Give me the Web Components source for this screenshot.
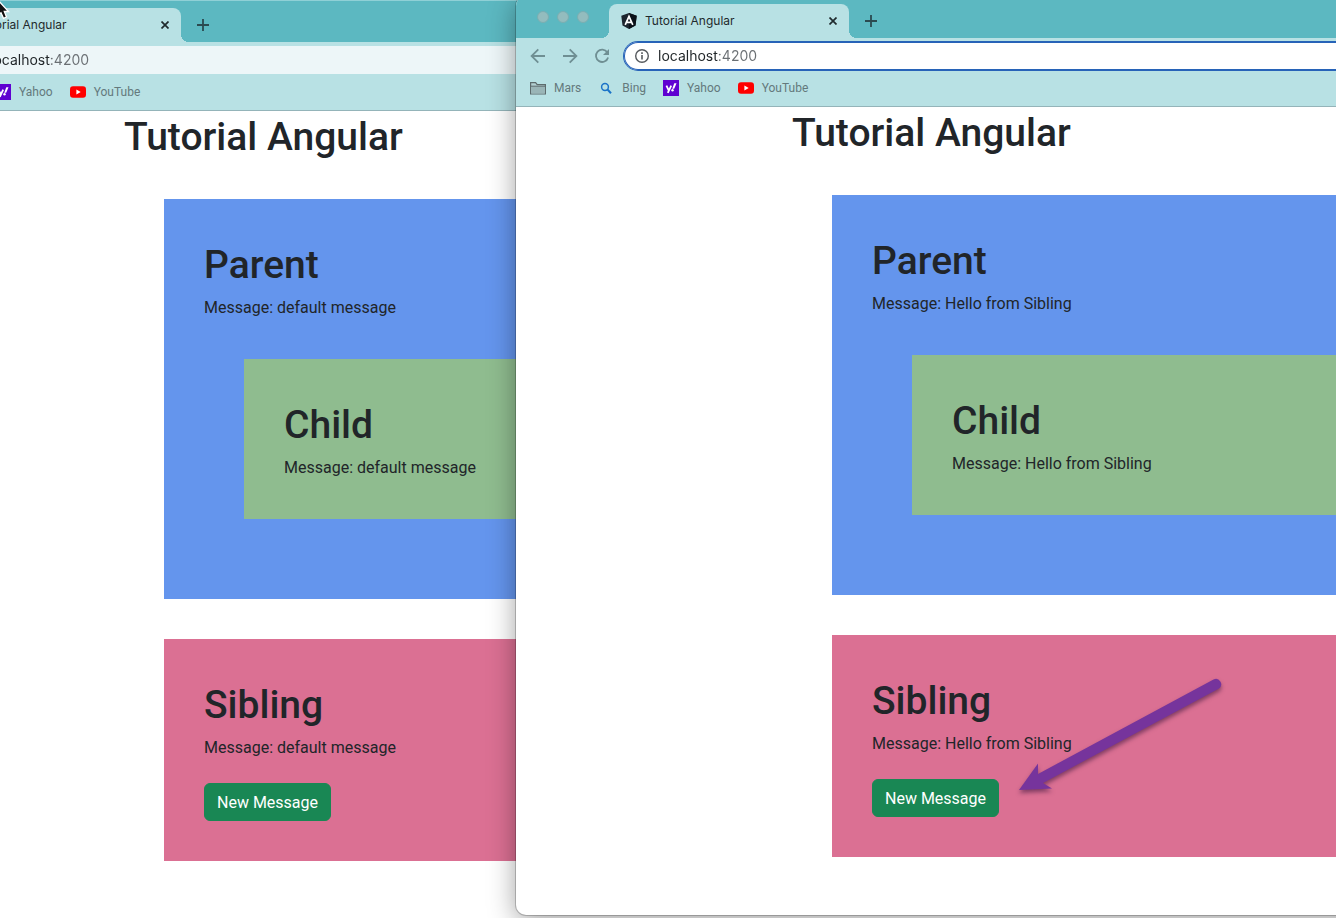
<!DOCTYPE html>
<html lang="en">
<head>
<meta charset="utf-8">
<title>Tutorial Angular</title>
<style>
  html, body { margin: 0; height: 100%; }
  body { overflow: hidden; background: #fff; }
</style>
</head>
<body>
<desktop-view>
  <browser-window class="back" address="localhost:4200">
    <tutorial-page message="default message"></tutorial-page>
  </browser-window>
  <browser-window class="front" address="localhost:4200" focused>
    <tutorial-page message="Hello from Sibling"></tutorial-page>
  </browser-window>
  <pointer-arrow slot="overlay"></pointer-arrow>
  <mouse-cursor slot="overlay"></mouse-cursor>
</desktop-view>

<script>
class BaseElement extends HTMLElement {
  connectedCallback() {
    if (this.shadowRoot) return;
    this.attachShadow({ mode: 'open' }).innerHTML = this.render();
  }
}

/* Free canvas on which the windows lie */
class DesktopView extends BaseElement {
  render() {
    return `
    <style>
      :host { display: block; position: relative; height: 100vh; overflow: hidden; font-family: Roboto, "Liberation Sans", sans-serif; }
      ::slotted(browser-window) { position: absolute; }
      ::slotted(.back) { top: 0; bottom: -1px; left: -152px; right: -180px; }
      ::slotted(.front) { top: -4px; bottom: 3px; left: 516px; right: -848px; }
      ::slotted(pointer-arrow) { position: absolute; left: 1010px; top: 670px; }
      ::slotted(mouse-cursor) { position: absolute; left: -4px; top: 0; }
    </style>
    <slot></slot><slot name="overlay"></slot>`;
  }
}

class BrowserWindow extends BaseElement {
  render() {
    return `
    <style>
      :host { display: flex; flex-direction: column; box-sizing: border-box; border-radius: 10px; overflow: hidden; background: #fff; box-shadow: 0 0 0 1px rgba(0,0,0,.2), 0 6px 28px rgba(0,0,0,.38); }
      .strip { display: flex; height: 42px; background: #5cb8c1; box-shadow: inset 0 1px #8fd0d6; }
      .lights { display: flex; align-items: center; gap: 8px; padding: 0 20px 0 21px; }
      .lights button { width: 12px; height: 12px; padding: 0; border: 1px solid #7aaeb2; border-radius: 50%; background: #93bcbe; }
      .new { align-self: center; width: 28px; height: 28px; margin: 8px 0 0 8px; padding: 0; border: 0; background: none; display: grid; place-items: center; }
      .toolbar { display: flex; align-items: center; gap: 16px; height: 28px; padding: 4px 14px 2px; background: #b8e1e4; }
      .toolbar > button { width: 16px; height: 16px; padding: 0; border: 0; background: none; display: grid; place-items: center; }
      svg { display: block; }
      .address { flex: 1; display: flex; align-items: center; gap: 8px; height: 28px; margin-left: -2px; padding-left: 10px; border-radius: 14px; background: #edf6f8; }
      :host([focused]) .address { background: #fff; box-shadow: 0 0 0 1px #2763b8, inset 0 0 0 1px #2763b8; }
      input { flex: 1; min-width: 0; height: 20px; padding: 0 0 2px; border: 0; outline: 0; font: 14px Inter, sans-serif; color: transparent; background: linear-gradient(90deg, #1f2427 61px, #6a6f73 61px); -webkit-background-clip: text; background-clip: text; }
      nav { display: flex; align-items: center; gap: 17px; height: 32px; padding: 0 14px 2px; background: #b8e1e4; border-bottom: 1px solid #94b4b9; }
      main { flex: 1; overflow: hidden; }
    </style>
    <div class="strip">
      <div class="lights"><button aria-label="Close window"></button><button aria-label="Minimise window"></button><button aria-label="Zoom window"></button></div>
      <browser-tab>Tutorial Angular</browser-tab>
      <button class="new" aria-label="New tab"><svg width="12" height="12" viewBox="0 0 12 12"><path d="M6 0v12M0 6h12" stroke="#2b4a50" stroke-width="1.8"/></svg></button>
    </div>
    <div class="toolbar">
      <button aria-label="Back"><svg width="16" height="16" viewBox="0 0 16 16" fill="none" stroke="#6f8f93" stroke-width="1.8"><path d="M15 8H2M8.3 1.3 1.6 8l6.7 6.7"/></svg></button>
      <button aria-label="Forward"><svg width="16" height="16" viewBox="0 0 16 16" fill="none" stroke="#6f8f93" stroke-width="1.8"><path d="M1 8h13M7.7 1.3 14.4 8l-6.7 6.7"/></svg></button>
      <button aria-label="Reload"><svg width="16" height="16" viewBox="0 0 16 16" fill="none" stroke="#6f8f93" stroke-width="1.8"><path d="M13.3 4.3A6.2 6.2 0 1 0 14.1 9.5"/><path d="M15 1v6H9z" fill="#6f8f93" stroke="none"/></svg></button>
      <div class="address">
        <svg width="16" height="16" viewBox="0 0 16 16"><circle cx="8" cy="8" r="6.3" fill="none" stroke="#55595d" stroke-width="1.4"/><path d="M8 7v4.5M8 4.3v1.6" stroke="#55595d" stroke-width="1.6"/></svg>
        <input type="text" aria-label="Address" spellcheck="false" value="${this.getAttribute('address')}">
      </div>
    </div>
    <nav aria-label="Bookmarks">
      <book-mark label="Mars"><svg width="16" height="16" viewBox="0 0 16 16"><path d="M.6 14V2.6h5l1.6 2h8.2V14z" fill="#b3d0d2" stroke="#5d6b6d" stroke-width="1.2"/><path d="M1.2 6.6h13.6v6.8H1.200z" fill="#9ab5b7"/><path d="M.6 6.2h14.8" stroke="#5d6b6d"/></svg></book-mark>
      <book-mark label="Bing"><svg width="16" height="16" viewBox="0 0 16 16" fill="none" stroke="#1a73c8"><circle cx="7" cy="7" r="3.4" stroke-width="1.5"/><path d="m9.5 9.5 3.5 3.7" stroke-width="2"/></svg></book-mark>
      <book-mark label="Yahoo"><svg width="16" height="16" viewBox="0 0 16 16"><path fill="#5f01d1" d="M0 0h16v16H0z"/><path d="m3.4 5.6 2.2 4.6M8.2 5.6l-3.400 7.200" fill="none" stroke="#fff" stroke-width="1.8"/><path d="M11.300 3.300h2.200L11.200 8.700H9.200z" fill="#fff"/><circle cx="9.500" cy="10.300" r="1.200" fill="#fff"/></svg></book-mark>
      <book-mark label="YouTube"><svg width="16" height="16" viewBox="0 0 16 16"><rect y="2.3" width="16" height="11.4" rx="3" fill="#f00"/><path d="m6.4 5.5 4.3 2.5-4.300 2.500z" fill="#fff"/></svg></book-mark>
    </nav>
    <main><slot></slot></main>`;
  }
}

class BrowserTab extends BaseElement {
  render() {
    return `
    <style>
      :host { position: relative; display: flex; align-items: center; gap: 8px; box-sizing: border-box; width: 240px; height: 34px; margin-top: 8px; padding: 0 10px 0 12px; border-radius: 8px 8px 0 0; background: #b8e1e4; color: #1f2a2d; font: 12px/16px Inter, sans-serif; }
      :host::before, :host::after { content: ""; position: absolute; bottom: 0; width: 8px; height: 8px; }
      :host::before { left: -8px; background: radial-gradient(circle at 0 0, transparent 8px, #b8e1e4 8px); }
      :host::after { right: -8px; background: radial-gradient(circle at 100% 0, transparent 8px, #b8e1e4 8px); }
      span { flex: 1; white-space: nowrap; }
      button { width: 12px; height: 12px; padding: 0; border: 0; background: none; display: grid; place-items: center; }
    </style>
    <svg width="16" height="16" viewBox="0 0 16 16"><path d="M8 0 15.7 2.7 14.5 12.5 8 16 1.5 12.500.3 2.700z" fill="#1c252e"/><path d="M8 0 15.7 2.7 14.5 12.5 8 16z" fill="#0b1118"/><path d="m4.2 11.800 3.800-8.500 3.800 8.500M5.600 9.400h4.800" fill="none" stroke="#fff" stroke-width="1.7"/></svg>
    <span><slot></slot></span>
    <button aria-label="Close tab"><svg width="8" height="8" viewBox="0 0 8 8"><path d="m.5.5 7 7m0-7-7 7" stroke="#1f2a2d" stroke-width="1.7"/></svg></button>`;
  }
}

class BookMark extends BaseElement {
  render() {
    return `
    <style>
      :host { display: block; }
      a { display: flex; align-items: center; gap: 8px; color: #64797c; text-decoration: none; font: 12px/16px Roboto, sans-serif; }
    </style>
    <a href="#"><slot></slot><span>${this.getAttribute('label')}</span></a>`;
  }
}

class TutorialPage extends BaseElement {
  render() {
    const m = this.getAttribute('message');
    return `
    <style>
      :host { display: block; box-sizing: border-box; max-width: 1140px; margin: 0 auto; padding: 0 12px; color: #212529; }
      h1 { margin: 0; font: 500 39px/52px Roboto, sans-serif; }
      message-card { margin: 40px; }
      .parent { --card: #6495ed; margin-top: 36px; }
      .child { --card: #8fbc8f; }
      .sibling { --card: #db7093; }
    </style>
    <h1>Tutorial Angular</h1>
    <message-card class="parent" heading="Parent" message="${m}">
      <message-card class="child" heading="Child" message="${m}"></message-card>
    </message-card>
    <message-card class="sibling" heading="Sibling" message="${m}">
      <action-button>New Message</action-button>
    </message-card>`;
  }
}

class MessageCard extends BaseElement {
  render() {
    return `
    <style>
      :host { display: flow-root; padding: 40px; background: var(--card); }
      h1 { margin: 0 0 4px; font: 500 39px/52px Roboto, sans-serif; }
      p { margin: 0; font: 16px/26px Roboto, sans-serif; }
      .body { height: 24px; }
      ::slotted(action-button) { margin-top: 24px; }
    </style>
    <h1>${this.getAttribute('heading')}</h1>
    <div class="body"><p>Message: ${this.getAttribute('message')}</p></div>
    <slot></slot>`;
  }
}

class ActionButton extends BaseElement {
  render() {
    return `
    <style>
      :host { display: flex; }
      button { padding: 7px 12px 5px; border: 1px solid #198754; border-radius: 6px; background: #198754; color: #fff; font: 16px/24px Roboto, sans-serif; }
    </style>
    <button type="button"><slot></slot></button>`;
  }
}

class PointerArrow extends BaseElement {
  render() {
    return `
    <style>:host { display: block; pointer-events: none; } svg { display: block; filter: drop-shadow(0 3px 2px rgba(40,10,50,.5)); }</style>
    <svg width="220" height="130" viewBox="0 0 220 130" aria-hidden="true"><path d="M9 120 28 93.500V104L203.500 9.500A5.300 5.300 0 0 1 209 18.500L33 113 42 118.500z" fill="#76349c"/></svg>`;
  }
}

class MouseCursor extends BaseElement {
  render() {
    return `
    <style>:host { display: block; pointer-events: none; } svg { display: block; }</style>
    <svg width="16" height="20" viewBox="0 0 16 20" aria-hidden="true"><path d="M1-1 12.500 11.500H8.300L10.500 17 7.500 18.300 5 12.700 1 16z" fill="#111" stroke="#fff" stroke-width="1.3"/></svg>`;
  }
}

customElements.define('action-button', ActionButton);
customElements.define('message-card', MessageCard);
customElements.define('tutorial-page', TutorialPage);
customElements.define('book-mark', BookMark);
customElements.define('browser-tab', BrowserTab);
customElements.define('browser-window', BrowserWindow);
customElements.define('pointer-arrow', PointerArrow);
customElements.define('mouse-cursor', MouseCursor);
customElements.define('desktop-view', DesktopView);
</script>
</body>
</html>
